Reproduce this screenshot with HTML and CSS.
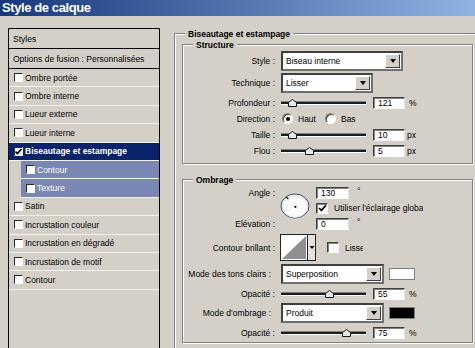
FILE: index.html
```html
<!DOCTYPE html>
<html lang="fr">
<head>
    <meta charset="UTF-8">
    <meta name="viewport" content="width=device-width, initial-scale=1.0">
    <title>Style de calque</title>
    <link rel="stylesheet" href="styles.css">
</head>
<body>
    <div class="titlebar">Style de calque</div>

    <div class="dialog">
        <!-- Liste des effets -->
        <div class="styles-panel">
            <div class="panel-head">Styles</div>
            <div class="panel-head">Options de fusion : Personnalisées</div>
            <ul class="effects">
                <li class="effect"><span class="check"></span>Ombre portée</li>
                <li class="effect"><span class="check"></span>Ombre interne</li>
                <li class="effect"><span class="check"></span>Lueur externe</li>
                <li class="effect"><span class="check"></span>Lueur interne</li>
                <li class="effect active">
                    <span class="check"><svg width="7" height="7" viewBox="0 0 7 7"><path d="M0.5 3.5 L2.5 5.5 L6.5 1" fill="none" stroke="#000" stroke-width="1.6"/></svg></span>Biseautage et estampage
                </li>
                <li class="effect sub"><span class="check"></span>Contour</li>
                <li class="effect sub"><span class="check"></span>Texture</li>
                <li class="effect"><span class="check"></span>Satin</li>
                <li class="effect"><span class="check"></span>Incrustation couleur</li>
                <li class="effect"><span class="check"></span>Incrustation en dégradé</li>
                <li class="effect"><span class="check"></span>Incrustation de motif</li>
                <li class="effect"><span class="check"></span>Contour</li>
            </ul>
        </div>

        <!-- Réglages -->
        <div class="group group-main">
            <span class="group-title">Biseautage et estampage</span>

            <div class="group structure">
                <span class="group-title">Structure</span>

                <div class="row row-select">
                    <span class="lbl">Style :</span>
                    <div class="select select-style"><span class="select-value">Biseau interne</span><span class="select-btn"></span></div>
                </div>
                <div class="row row-select">
                    <span class="lbl">Technique :</span>
                    <div class="select select-technique"><span class="select-value">Lisser</span><span class="select-btn"></span></div>
                </div>
                <div class="row">
                    <span class="lbl">Profondeur :</span>
                    <div class="slider"><svg class="thumb" style="left: 12.1%" width="9" height="8" viewBox="0 0 9 8"><path d="M0.5 7.5 V3.5 L4.5 0.5 L8.5 3.5 V7.5 Z" fill="#ebe9e3" stroke="#1a1a1a"/></svg></div>
                    <span class="field">121</span>
                    <span class="unit">%</span>
                </div>
                <div class="row">
                    <span class="lbl">Direction :</span>
                    <span class="radio on"></span><span class="radio-text">Haut</span>
                    <span class="radio radio-next"></span><span class="radio-text">Bas</span>
                </div>
                <div class="row">
                    <span class="lbl">Taille :</span>
                    <div class="slider"><svg class="thumb" style="left: 12%" width="9" height="8" viewBox="0 0 9 8"><path d="M0.5 7.5 V3.5 L4.5 0.5 L8.5 3.5 V7.5 Z" fill="#ebe9e3" stroke="#1a1a1a"/></svg></div>
                    <span class="field">10</span>
                    <span class="unit unit-px">px</span>
                </div>
                <div class="row">
                    <span class="lbl">Flou :</span>
                    <div class="slider"><svg class="thumb" style="left: 31.3%" width="9" height="8" viewBox="0 0 9 8"><path d="M0.5 7.5 V3.5 L4.5 0.5 L8.5 3.5 V7.5 Z" fill="#ebe9e3" stroke="#1a1a1a"/></svg></div>
                    <span class="field">5</span>
                    <span class="unit unit-px">px</span>
                </div>
            </div>

            <div class="group shading">
                <span class="group-title">Ombrage</span>

                <div class="angle-grid">
                    <span class="lbl">Angle :</span>
                    <svg class="dial" width="30" height="26" viewBox="0 0 30 26">
                        <ellipse cx="15" cy="13" rx="14" ry="12" fill="#fbfbfb" stroke="#3c4a70"/>
                        <ellipse cx="15" cy="13.6" rx="12.6" ry="10.8" fill="none" stroke="#e2e0da"/>
                        <line x1="6" y1="3.8" x2="8.4" y2="6.2" stroke="#000" stroke-width="1.2"/>
                        <circle cx="15.4" cy="13.8" r="1.1" fill="#000"/>
                    </svg>
                    <span class="cell"><span class="field field-angle">130</span><span class="deg">°</span></span>
                    <span class="cell cell-check">
                        <span class="check check-lg"><svg width="9" height="8" viewBox="0 0 9 8"><path d="M1 4 L3.4 6.4 L8 1.2" fill="none" stroke="#000" stroke-width="1.7"/></svg></span>
                        <span class="clip clip-global">Utiliser l'éclairage global</span>
                    </span>
                    <span class="lbl lbl-elev">Elévation :</span>
                    <span class="cell cell-elev"><span class="field field-angle">0</span><span class="deg">°</span></span>
                </div>

                <div class="row row-contour">
                    <span class="lbl">Contour brillant :</span>
                    <svg class="contour-preview" width="36" height="27" viewBox="0 0 36 27">
                        <rect x="0.5" y="0.5" width="35" height="26" fill="#e4e2dc" stroke="#222"/>
                        <rect x="1" y="1" width="26" height="25" fill="#fff"/>
                        <polygon points="2,25 26,2 26,25" fill="#8f8f8f"/>
                        <line x1="27.5" y1="1" x2="27.5" y2="26" stroke="#222"/>
                        <path d="M29.5 12 h5 l-2.5 3 z" fill="#000"/>
                    </svg>
                    <span class="check check-lg check-lisse"></span>
                    <span class="clip clip-lisse">Lisse</span>
                </div>

                <div class="row row-select row-mode">
                    <span class="lbl">Mode des tons clairs :</span>
                    <div class="select select-mode"><span class="select-value">Superposition</span><span class="select-btn"></span></div>
                    <span class="swatch swatch-light"></span>
                </div>
                <div class="row">
                    <span class="lbl">Opacité :</span>
                    <div class="slider"><svg class="thumb" style="left: 55%" width="9" height="8" viewBox="0 0 9 8"><path d="M0.5 7.5 V3.5 L4.5 0.5 L8.5 3.5 V7.5 Z" fill="#ebe9e3" stroke="#1a1a1a"/></svg></div>
                    <span class="field">55</span>
                    <span class="unit">%</span>
                </div>
                <div class="row row-select row-mode">
                    <span class="lbl">Mode d'ombrage :</span>
                    <div class="select select-mode"><span class="select-value">Produit</span><span class="select-btn"></span></div>
                    <span class="swatch swatch-dark"></span>
                </div>
                <div class="row">
                    <span class="lbl">Opacité :</span>
                    <div class="slider"><svg class="thumb" style="left: 75%" width="9" height="8" viewBox="0 0 9 8"><path d="M0.5 7.5 V3.5 L4.5 0.5 L8.5 3.5 V7.5 Z" fill="#ebe9e3" stroke="#1a1a1a"/></svg></div>
                    <span class="field">75</span>
                    <span class="unit">%</span>
                </div>
            </div>
        </div>
    </div>
</body>
</html>
```

FILE: styles.css
```css
/* Reset & Variables */
* {
    margin: 0;
    padding: 0;
    box-sizing: border-box;
}

:root {
    --face: #d4d0c8;
    --shadow: #808080;
    --dark: #404040;
    --hilite: #ffffff;
    --selected: #0a246a;
    --sub-selected: #7a87b2;
}

body {
    width: 475px;
    height: 348px;
    overflow: hidden;
    background-color: var(--face);
    font-family: "Liberation Sans", Arial, sans-serif;
    font-size: 8.5px;
    line-height: 10px;
    color: #000;
}

/* Title bar */
.titlebar {
    height: 16px;
    padding-left: 2px;
    background: linear-gradient(to right, #17377e 0%, #8fb3e1 100%);
    color: var(--hilite);
    font-size: 13px;
    font-weight: bold;
    line-height: 16px;
    letter-spacing: -0.4px;
}

.dialog {
    display: flex;
    align-items: flex-start;
    height: 332px;
    padding: 12px 0 0 8px;
    overflow: hidden;
}

/* Styles list */
.styles-panel {
    flex: 0 0 152px;
    height: 330px;
    border: 1px solid #000;
}

.panel-head {
    display: flex;
    align-items: center;
    height: 20px;
    padding-left: 4px;
    border-bottom: 1px solid #000;
}

.effects {
    list-style: none;
}

.effect {
    display: flex;
    align-items: center;
    height: 18.4px;
    padding-left: 5px;
    border-bottom: 1px solid #f3f2ee;
}

.effect.active {
    background-color: var(--selected);
    color: var(--hilite);
    font-weight: bold;
}

.effect.sub {
    margin-left: 12px;
    background-color: var(--sub-selected);
    color: var(--hilite);
}

.check {
    flex: none;
    display: flex;
    align-items: center;
    justify-content: center;
    width: 9px;
    height: 9px;
    margin-right: 2px;
    background-color: #fff;
    border: 1px solid;
    border-color: #2a2a2a #fff #fff #2a2a2a;
}

.check-lg {
    width: 12px;
    height: 11px;
    margin-right: 0;
    border-color: var(--dark) #fff #fff var(--dark);
    box-shadow: inset 1px 1px 0 var(--shadow);
}

/* Group boxes */
.group {
    position: relative;
    border: 1px solid var(--shadow);
    box-shadow: inset 1px 1px 0 var(--hilite), 1px 1px 0 var(--hilite);
}

.group-title {
    position: absolute;
    top: -5px;
    left: 10px;
    padding: 0 3px;
    background-color: var(--face);
    font-weight: bold;
    white-space: nowrap;
}

.group-main {
    flex: 0 0 307px;
    height: 330px;
    margin: 5px 0 0 14px;
    padding: 10px 7px 0;
}

.structure {
    padding: 6px 0 6px;
}

.shading {
    margin-top: 15px;
    padding: 7px 0 3px;
}

/* Rows */
.row {
    display: flex;
    align-items: center;
    height: 13px;
    margin-top: 3px;
}

.row:first-of-type {
    margin-top: 0;
}

.row-select {
    height: 20px;
    margin-top: 2px;
}

.shading .row-select {
    margin-top: 3px;
}

.row-contour {
    height: 27px;
    margin-top: 5px;
}

.lbl {
    flex: none;
    width: 92px;
    margin-right: 6px;
    text-align: right;
    white-space: nowrap;
}

.row-mode .lbl {
    padding-right: 4px;
}

/* Drop-down */
.select {
    flex: none;
    display: flex;
    align-items: center;
    height: 20px;
    padding: 1px;
    background-color: #fff;
    border: 2px solid;
    border-color: var(--dark) #707070 #707070 var(--dark);
}

.select-style {
    width: 122px;
}

.select-technique {
    width: 92px;
}

.select-mode {
    width: 103px;
}

.select-value {
    flex: 1;
    padding-left: 2px;
}

.select-btn {
    flex: none;
    display: flex;
    align-items: center;
    justify-content: center;
    width: 15px;
    height: 100%;
    background-color: var(--face);
    border: 1px solid;
    border-color: #fff var(--dark) var(--dark) #fff;
}

.select-btn::after {
    content: "";
    border-top: 4px solid #000;
    border-left: 3.5px solid transparent;
    border-right: 3.5px solid transparent;
}

/* Slider */
.slider {
    position: relative;
    flex: none;
    width: 85px;
    height: 4px;
    background-color: #1e1e1e;
    border-top: 1px solid var(--shadow);
    border-bottom: 1px solid #fff;
}

.thumb {
    position: absolute;
    top: -3px;
    margin-left: -3px;
}

/* Text field */
.field {
    flex: none;
    display: flex;
    align-items: center;
    width: 32px;
    height: 12px;
    margin-left: 7px;
    padding-left: 4px;
    background-color: #fff;
    border: 1px solid;
    border-color: var(--dark) #e6e4de #fff var(--dark);
    box-shadow: inset 1px 1px 0 var(--shadow);
}

.unit {
    margin-left: 4px;
}

.unit-px {
    margin-left: 2px;
}

/* Radio */
.radio {
    flex: none;
    display: flex;
    align-items: center;
    justify-content: center;
    width: 11px;
    height: 11px;
    margin-left: 1px;
    border-radius: 50%;
    background-color: #fff;
    border: 1px solid;
    border-color: var(--shadow) #fff #fff var(--shadow);
    box-shadow: inset 1px 1px 0 var(--dark);
}

.radio.on::after {
    content: "";
    width: 4px;
    height: 4px;
    border-radius: 50%;
    background-color: #000;
}

.radio-next {
    margin-left: 9px;
}

.radio-text {
    margin-left: 5px;
}

/* Angle */
.angle-grid {
    display: grid;
    grid-template-columns: 97px 36px auto;
    grid-template-rows: 11px 12px 11px;
    row-gap: 4px;
    align-items: center;
}

.angle-grid .lbl {
    width: 97px;
    margin-right: 0;
    padding-right: 5px;
}

.dial {
    grid-column: 2;
    grid-row: 1 / 4;
    align-self: start;
    margin-top: 6px;
}

.lbl-elev {
    grid-column: 1;
    grid-row: 3;
}

.cell {
    display: flex;
    align-items: center;
}

.cell-check {
    grid-column: 3;
    grid-row: 2;
}

.cell-elev {
    grid-column: 3;
    grid-row: 3;
}

.field-angle {
    width: 33px;
    margin-left: 0;
}

.deg {
    margin-left: 8px;
    align-self: flex-start;
    line-height: 8px;
}

.clip {
    overflow: hidden;
    white-space: nowrap;
    margin-left: 6px;
}

.clip-global {
    width: 89px;
}

.clip-lisse {
    width: 18px;
}

.contour-preview {
    flex: none;
    margin-left: -1px;
}

.check-lisse {
    margin-left: 11px;
}

/* Colour swatches */
.swatch {
    flex: none;
    width: 26px;
    height: 12px;
    margin-left: 5px;
    border: 1px solid var(--shadow);
}

.swatch-light {
    background-color: #fff;
}

.swatch-dark {
    background-color: #000;
}
```
